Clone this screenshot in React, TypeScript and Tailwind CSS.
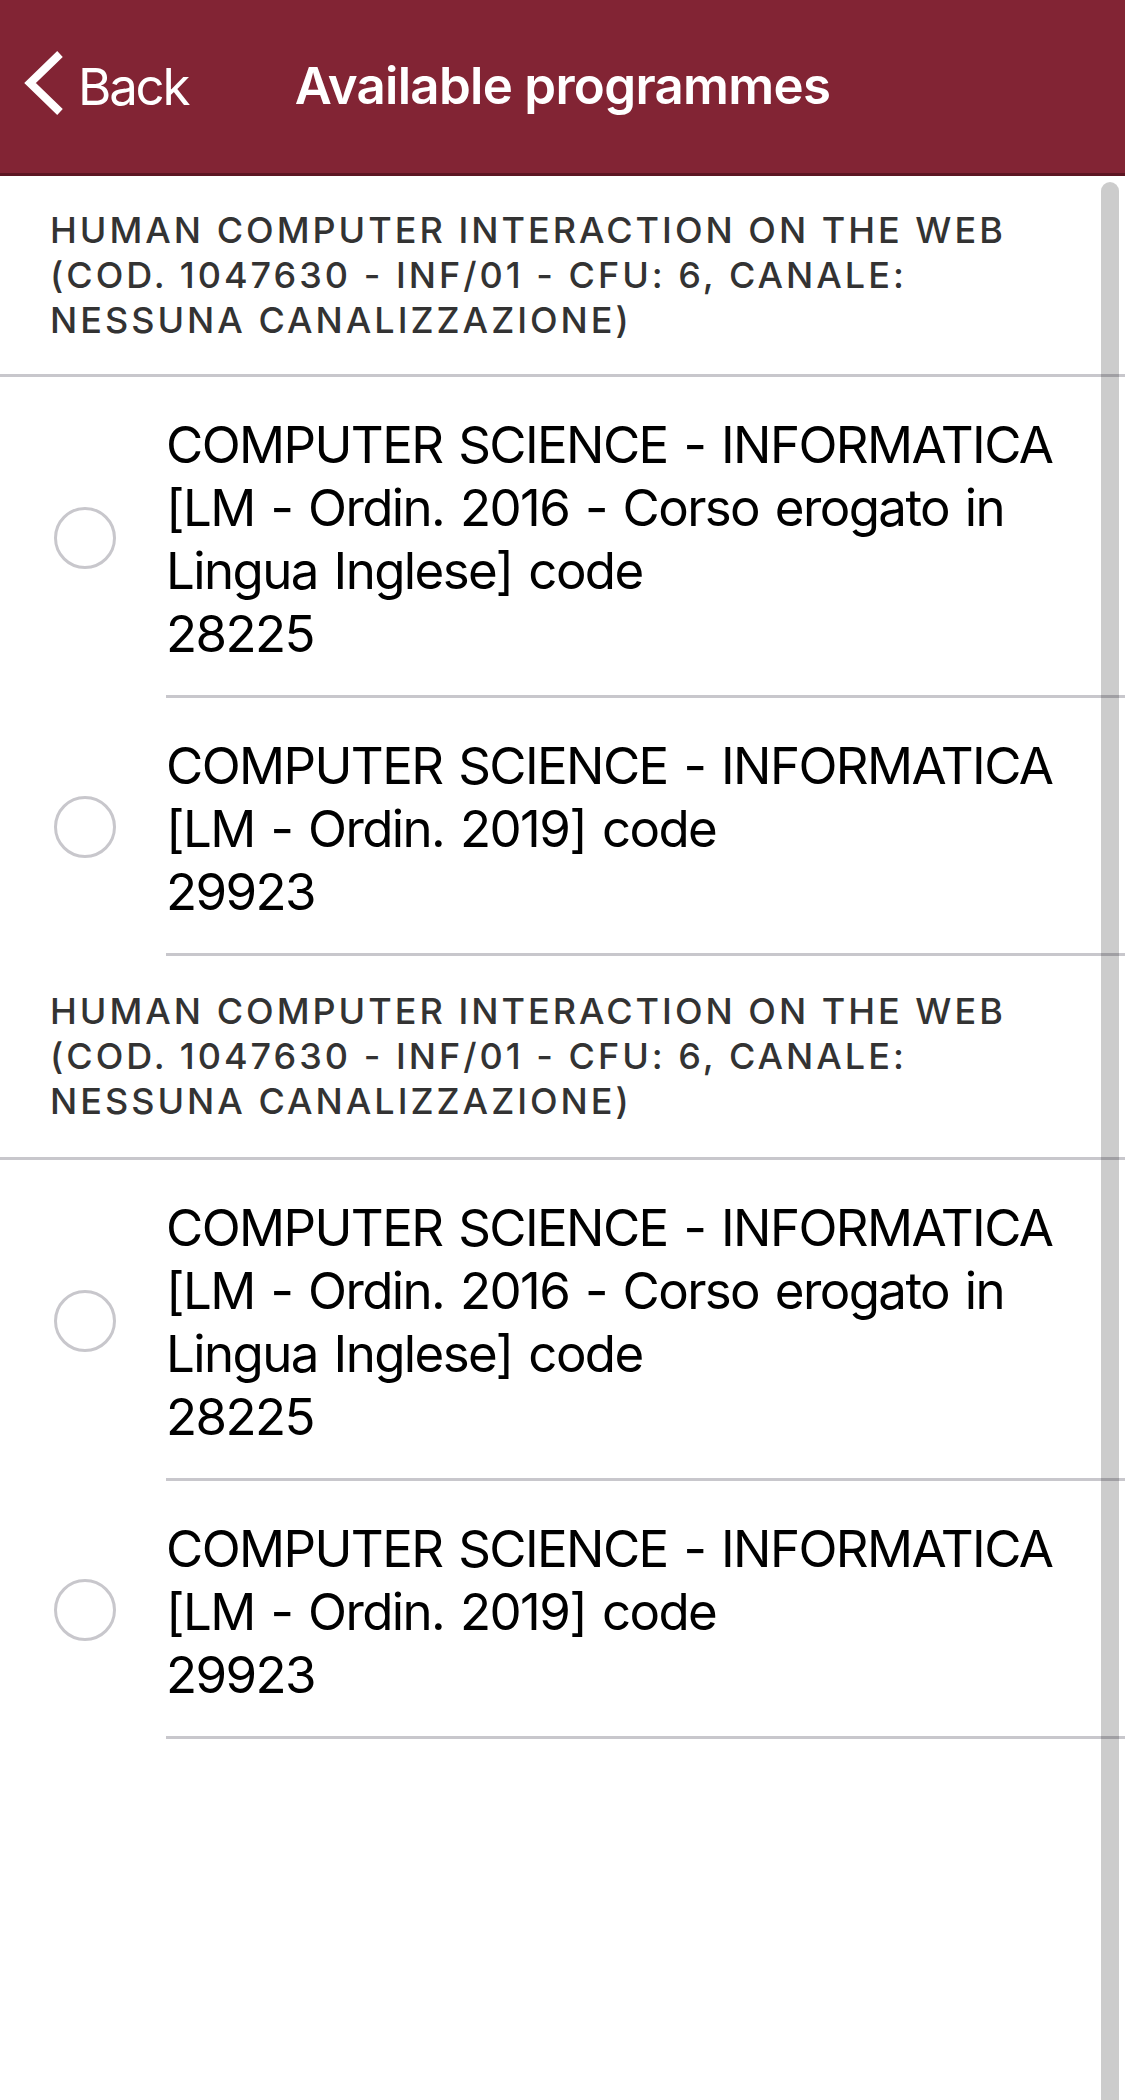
import React from "react";

const FONT = "font-['Inter',sans-serif]";

function SectionHeader({ second }: { second?: boolean }) {
  return (
    <div
      className={
        second
          ? "border-b-[3px] border-[#c8c7cc] px-[50px] pt-[33px] pb-[33px]"
          : "border-b-[3px] border-[#c8c7cc] px-[50px] pt-[32px] pb-[31px]"
      }
    >
      <div className="text-[36px] font-medium leading-[45px] tracking-[3px] text-[#333333] uppercase">
        <div className="whitespace-nowrap">HUMAN COMPUTER INTERACTION ON THE WEB</div>
        <div className="whitespace-nowrap">(COD. 1047630 - INF/01 - CFU: 6, CANALE:</div>
        <div className="whitespace-nowrap">NESSUNA CANALIZZAZIONE)</div>
      </div>
    </div>
  );
}

function Row({ lines }: { lines: string[] }) {
  return (
    <div className="flex items-stretch">
      <div className="flex w-[166px] shrink-0 items-center pl-[54px]">
        <div className="h-[62px] w-[62px] rounded-full border-[3px] border-[#c8c7cc]" />
      </div>
      <div className="flex-1 border-b-[3px] border-[#c8c7cc] pt-[36px] pb-[30px]">
        <div className="text-[51px] leading-[63px] tracking-[-1.6px] [word-spacing:3px] text-black">
          {lines.map((l, i) => (
            <div key={i} className="whitespace-nowrap">
              {l}
            </div>
          ))}
        </div>
      </div>
    </div>
  );
}

function Group({ second }: { second?: boolean }) {
  return (
    <>
      <SectionHeader second={second} />
      <Row
        lines={[
          "COMPUTER SCIENCE - INFORMATICA",
          "[LM - Ordin. 2016 - Corso erogato in",
          "Lingua Inglese] code",
          "28225",
        ]}
      />
      <Row
        lines={[
          "COMPUTER SCIENCE - INFORMATICA",
          "[LM - Ordin. 2019] code",
          "29923",
        ]}
      />
    </>
  );
}

export default function App() {
  return (
    <div className={`relative h-[2100px] w-[1125px] overflow-hidden bg-white ${FONT}`}>
      <header className="grid h-[176px] grid-cols-[1fr_auto_1fr] items-center border-b-[3px] border-[#5c1622] bg-[#822434] pb-[3px]">
        <div className="flex items-center pl-[23px]">
          <svg width="40" height="66" viewBox="0 0 40 66" className="-mt-[4px]">
            <polyline
              points="37,4 7,33 37,62"
              fill="none"
              stroke="#ffffff"
              strokeWidth="8"
              strokeLinejoin="miter"
              strokeLinecap="butt"
            />
          </svg>
          <span className="ml-[15px] text-[51px] leading-[63px] tracking-[-2.2px] text-white pt-[2px]">
            Back
          </span>
        </div>
        <h1 className="text-[51px] font-semibold leading-[63px] tracking-[-0.7px] text-white">
          Available programmes
        </h1>
        <div />
      </header>

      <main>
        <Group />
        <Group second />
      </main>

      <div className="absolute right-[6px] top-[182px] bottom-0 w-[18px] rounded-t-full bg-black/20" />
    </div>
  );
}
